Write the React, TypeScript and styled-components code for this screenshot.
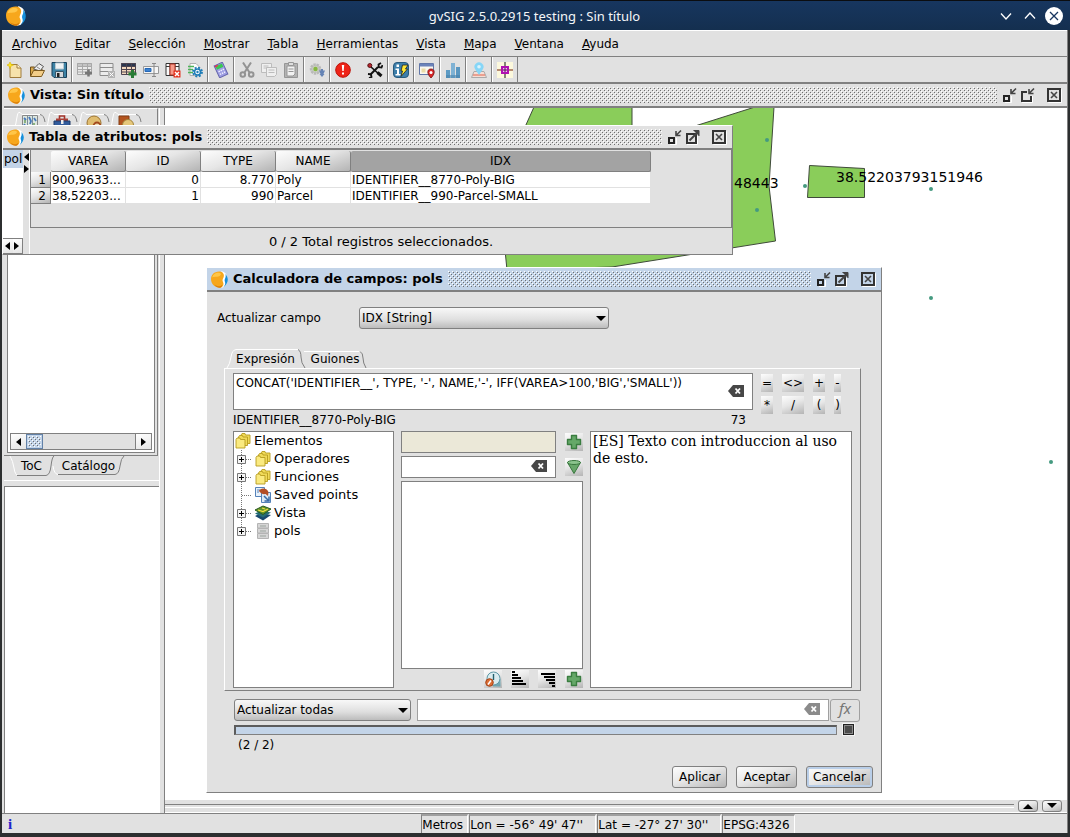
import React from 'react';
import styled, { createGlobalStyle, css } from 'styled-components';

const color = {
  panel: '#e1e1e1',
  line: '#808080',
  active: '#c3d4e8',
  field: '#ebe8d8',
  polygon: '#8acd5a',
  point: '#459a80',
};

const raised = css`
  background: linear-gradient(160deg, #fdfdfd 0%, #e6e6e6 45%, #b4b4b4 100%);
`;

const GlobalStyle = createGlobalStyle`
  * { box-sizing: border-box; }
  body {
    margin: 0;
    background: #2c2e2f;
    color: #000;
    font: 12px/16px "DejaVu Sans", sans-serif;
  }
  button, input, select, textarea {
    margin: 0;
    padding: 0;
    border: 0;
    border-radius: 0;
    background: none;
    color: inherit;
    font: inherit;
  }
  svg { display: block; flex: none; }
`;

/* ---------- main frame ---------- */

const Frame = styled.div`
  display: flex;
  flex-direction: column;
  min-height: 100vh;
`;

const SystemBar = styled.header`
  display: grid;
  grid-template-columns: 72px 1fr 72px;
  align-items: center;
  height: 30px;
  padding: 0 7px 0 6px;
  border-top: 1px solid #0b0d10;
  background: linear-gradient(#17365f, #142f4f);
  color: #f4f6f8;
  font: 13px/20px "Noto Sans", sans-serif;
`;

const SystemTitle = styled.h1`
  margin: 0;
  font: inherit;
  text-align: center;
`;

const SystemButtons = styled.div`
  display: flex;
  justify-content: flex-end;
  gap: 6px;
`;

const PlainButton = styled.button`
  display: flex;
  align-items: center;
  justify-content: center;
`;

const Shell = styled.div`
  flex: 1;
  display: flex;
  flex-direction: column;
  margin: 0 2px 4px;
  border-right: 1px solid ${color.line};
  background: ${color.panel};
`;

const MenuBar = styled.nav`
  display: flex;
  align-items: center;
  gap: 18px;
  height: 27px;
  padding: 0 10px;
  border-top: 1px solid #fff;
  border-bottom: 1px solid ${color.line};
`;

const MenuItem = styled.button`
  line-height: 20px;
`;

const ToolBar = styled.div`
  display: flex;
  height: 27px;
  border-bottom: 2px solid ${color.line};
`;

const ToolGroup = styled.div<{ $gap?: number }>`
  display: flex;
  gap: ${(p) => p.$gap ?? 0}px;
  padding: 0 1px;
  border-left: 1px solid #fff;
  border-right: 1px solid ${color.line};
`;

const ToolButton = styled.button`
  display: flex;
  align-items: center;
  justify-content: center;
  width: 22px;
`;

const Desktop = styled.main`
  position: relative;
  flex: 1;
  display: flex;
  flex-direction: column;
`;

/* ---------- internal windows ---------- */

const TitleBar = styled.div<{ $active?: boolean }>`
  display: flex;
  align-items: center;
  gap: 5px;
  height: 24px;
  padding: 0 5px 0 4px;
  border-bottom: 2px solid ${color.line};
  background: ${(p) => (p.$active ? color.active : color.panel)};
`;

const WindowTitle = styled.h2`
  margin: 0;
  font: bold 13px/20px "DejaVu Sans", sans-serif;
  white-space: nowrap;
`;

const BumpArea = styled.svg`
  flex: 1;
  width: 0;
  min-width: 0;
  height: 16px;
`;

const WindowButtons = styled.div`
  display: flex;
  gap: 2px;
  button:last-child { margin-left: 8px; }
`;

const ViewWindow = styled.section`
  flex: 1;
  display: flex;
  flex-direction: column;
  padding-left: 2px;
`;

const FloatingWindow = styled.section<{ $x: number; $y: number; $w: number }>`
  position: absolute;
  left: ${(p) => p.$x}px;
  top: ${(p) => p.$y}px;
  width: ${(p) => p.$w}px;
  border: 1px solid #fff;
  border-right-color: ${color.line};
  border-bottom-color: ${color.line};
  background: ${color.panel};
`;

/* ---------- map view ---------- */

const ViewBody = styled.div`
  flex: 1;
  display: flex;
`;

const SideColumn = styled.aside`
  display: flex;
  flex-direction: column;
  width: 155px;
`;

const TocPane = styled.div`
  display: flex;
  flex-direction: column;
  height: 348px;
  margin-right: 1px;
  border-top: 1px solid #fff;
  border-right: 1px solid ${color.line};
  border-bottom: 1px solid ${color.line};
`;

const IconTabs = styled.div`
  display: flex;
  height: 20px;
  padding-left: 10px;
`;

const IconTab = styled.button`
  width: 32px;
  height: 20px;
`;

const TocList = styled.div`
  flex: 1;
  display: flex;
  flex-direction: column;
  justify-content: flex-end;
  margin: 0 2px 2px 3px;
  padding: 0 2px 2px;
  border: 1px solid ${color.line};
  background: #fff;
`;

const ScrollTrack = styled.div`
  display: flex;
  height: 17px;
  border: 1px solid ${color.line};
  background: ${color.panel};
`;

const ScrollArrow = styled.button`
  display: flex;
  align-items: center;
  justify-content: center;
  width: 15px;
  background: linear-gradient(160deg, #fff, #e4e4e4);
`;

const ScrollThumb = styled.div`
  display: flex;
  width: 17px;
  padding: 1px;
  overflow: hidden;
  border: 1px solid #6382a8;
  background: ${color.active};
  svg { height: 11px; }
`;

const ScrollSpace = styled.div`
  flex: 1;
  border-right: 1px solid ${color.line};
`;

const BottomTabs = styled.div`
  display: flex;
  height: 24px;
  padding-left: 6px;
`;

const Overview = styled.div`
  flex: 1;
  border-top: 1px solid ${color.line};
  border-left: 1px solid ${color.line};
  background: #fff;
`;

const HorizontalSplitter = styled.div`
  height: 6px;
  border-top: 1px solid #fff;
`;

const VerticalSplitter = styled.div`
  width: 6px;
  border-left: 1px solid #fff;
  border-right: 1px solid ${color.line};
`;

const MapColumn = styled.div`
  flex: 1;
  display: flex;
  flex-direction: column;
  background: #fff;
`;

const MapCanvas = styled.svg`
  flex: 1;
  width: 100%;
`;

const MapFooter = styled.div`
  display: flex;
  align-items: center;
  gap: 4px;
  height: 13px;
  padding-right: 5px;
  border-bottom: 1px solid #fff;
  background: ${color.panel};
`;

const MapFooterRule = styled.div`
  flex: 1;
  height: 4px;
  border-top: 1px solid ${color.line};
  border-bottom: 1px solid #fff;
`;

const StepButton = styled.button`
  display: flex;
  align-items: center;
  justify-content: center;
  width: 20px;
  height: 12px;
  border: 1px solid ${color.line};
  border-radius: 3px;
  ${raised}
`;

const StatusBar = styled.footer`
  display: flex;
  gap: 1px;
  height: 20px;
  border-top: 1px solid ${color.line};
`;

const StatusInfo = styled.div`
  flex: 17 1 0;
  color: #2222cc;
  font: bold 15px/20px "Liberation Serif", serif;
  text-indent: 6px;
`;

const StatusRest = styled.div`
  flex: 11 1 0;
`;

const StatusCell = styled.div<{ $w: number }>`
  width: ${(p) => p.$w}px;
  border-top: 2px solid #a0a0a0;
  border-left: 1px solid ${color.line};
  border-right: 1px solid #fff;
  line-height: 18px;
  white-space: nowrap;
`;

/* ---------- attribute table window ---------- */

const TableBody = styled.div`
  display: flex;
  height: 104px;
`;

const LayerList = styled.div`
  display: flex;
  flex-direction: column;
  justify-content: space-between;
  width: 20px;
  background: #fff;
`;

const LayerName = styled.div`
  padding-left: 1px;
  background: ${color.active};
  line-height: 18px;
`;

const MiniScroll = styled.div`
  display: flex;
  height: 16px;
  border: 1px solid ${color.line};
  border-left: 0;
`;

const TableSplitter = styled.div`
  display: flex;
  flex-direction: column;
  gap: 4px;
  width: 7px;
  padding-top: 3px;
  border-right: 1px solid #fff;
`;

const TablePane = styled.div`
  flex: 1;
  display: flex;
  flex-direction: column;
`;

const TableScroll = styled.div`
  height: 78px;
  padding-top: 1px;
  border: 1px solid ${color.line};
  border-top: 0;
`;

const DataTable = styled.table`
  border-collapse: separate;
  border-spacing: 0;
  table-layout: fixed;
  width: 620px;
`;

const HeadCell = styled.th<{ $w: number; $pressed?: boolean }>`
  width: ${(p) => p.$w}px;
  height: 21px;
  padding: 0;
  border-right: 1px solid ${color.line};
  border-bottom: 1px solid ${color.line};
  border-radius: 2px;
  font-weight: normal;
  ${raised}
  ${(p) => p.$pressed && css`background: #a3a3a3;`}
`;

const CornerCell = styled.td`
  width: 20px;
`;

const RowHead = styled.th`
  height: 16px;
  padding: 1px 4px 0 0;
  border-right: 1px solid ${color.line};
  border-bottom: 1px solid ${color.line};
  font-weight: normal;
  line-height: 14px;
  text-align: right;
  ${raised}
`;

const Cell = styled.td<{ $right?: boolean }>`
  height: 16px;
  padding: 1px 1px 0;
  border-right: 1px solid ${color.panel};
  border-bottom: 1px solid ${color.panel};
  background: #fff;
  line-height: 14px;
  text-align: ${(p) => (p.$right ? 'right' : 'left')};
  white-space: nowrap;
`;

const TableStatus = styled.p`
  margin: 6px 0 0;
  font-size: 13px;
  text-align: center;
`;

/* ---------- field calculator ---------- */

const DialogBody = styled.div`
  padding: 15px 8px 4px 10px;
`;

const FieldRow = styled.div`
  display: grid;
  grid-template-columns: 142px 250px;
  align-items: center;
`;

const SelectBox = styled.div<{ $w: number }>`
  position: relative;
  width: ${(p) => p.$w}px;
  &::after {
    content: '';
    position: absolute;
    right: 3px;
    top: 9px;
    border: 5px solid transparent;
    border-top-color: #000;
    border-bottom: 0;
    pointer-events: none;
  }
`;

const Select = styled.select`
  display: block;
  appearance: none;
  width: 100%;
  height: 22px;
  padding: 0 2px;
  border: 1px solid ${color.line};
  border-radius: 3px;
  background: linear-gradient(#f8f8f8, #dedede 60%, #bcbcbc);
`;

const TabStrip = styled.div`
  display: flex;
  margin: 20px 0 0 10px;
`;

const TabButton = styled.button<{ $w: number; $h: number }>`
  position: relative;
  width: ${(p) => p.$w}px;
  height: ${(p) => p.$h}px;
  svg { position: absolute; left: 0; top: 0; overflow: visible; }
  span { position: relative; white-space: nowrap; }
`;

const ExpressionPane = styled.div`
  margin: 0 12px 0 7px;
  padding: 4px 8px 2px;
  border: 1px solid ${color.line};
  border-top-color: #fff;
  border-left-color: #fff;
`;

const ExpressionRow = styled.div`
  display: flex;
  align-items: flex-start;
  gap: 8px;
  height: 37px;
`;

const FieldFrame = styled.div<{ $h: number; $w?: number; $muted?: boolean; $soft?: boolean }>`
  display: flex;
  align-items: center;
  ${(p) => (p.$w ? `width: ${p.$w}px;` : 'flex: 1;')}
  height: ${(p) => p.$h}px;
  padding: 0 8px 2px 2px;
  border: 1px solid ${(p) => (p.$soft ? '#a0a0a0' : color.line)};
  background: ${(p) => (p.$muted ? color.field : '#fff')};
`;

const ExpressionText = styled.textarea`
  flex: 1;
  height: 33px;
  padding-top: 1px;
  overflow: hidden;
  resize: none;
`;

const TextInput = styled.input`
  flex: 1;
  min-width: 0;
  height: 18px;
`;

const OperatorGrid = styled.div`
  display: grid;
  grid-template-columns: 12px 22px 12px 7px;
  gap: 4px 9px;
  margin-top: 1px;
`;

const OperatorButton = styled.button`
  display: flex;
  align-items: center;
  justify-content: center;
  height: 18px;
  ${raised}
`;

const PreviewRow = styled.div`
  display: flex;
  justify-content: space-between;
  width: 513px;
  padding: 2px 0 3px;
`;

const BuilderRow = styled.div`
  display: flex;
  gap: 7px;
  height: 257px;
`;

const Tree = styled.ul`
  width: 161px;
  margin: 0;
  padding: 0;
  border: 1px solid ${color.line};
  background: #fff;
  list-style: none;
`;

const TreeItem = styled.li<{ $root?: boolean }>`
  display: flex;
  align-items: center;
  gap: 3px;
  height: 18px;
  padding-left: ${(p) => (p.$root ? 1 : 3)}px;
  font-size: 13px;
`;

const FinderColumn = styled.div`
  display: flex;
  flex-direction: column;
  gap: 3px;
  width: 182px;
`;

const FinderLine = styled.div`
  display: flex;
  align-items: center;
  justify-content: space-between;
`;

const ResultList = styled.div`
  flex: 1;
  border: 1px solid ${color.line};
  background: #fff;
`;

const FinderTools = styled.div`
  display: flex;
  justify-content: flex-end;
  gap: 9px;
  margin-top: -2px;
`;

const SquareButton = styled.button`
  display: flex;
  align-items: center;
  justify-content: center;
  width: 18px;
  height: 18px;
  ${raised}
`;

const HelpText = styled.div`
  flex: 1;
  padding: 1px 2px;
  border: 1px solid ${color.line};
  background: #fff;
  font: 14px/17px "DejaVu Serif", serif;
`;

const FilterRow = styled.div`
  display: flex;
  gap: 6px;
  margin: 8px 13px 0 17px;
`;

const FilterField = styled.div`
  flex: 1;
  display: flex;
  gap: 1px;
`;

const FormulaButton = styled.button`
  width: 30px;
  height: 23px;
  padding-bottom: 5px;
  border: 1px solid #a0a0a0;
  border-radius: 3px;
  color: #757575;
  font: italic 15px/16px "Noto Sans", "DejaVu Sans", sans-serif;
`;

const ProgressRow = styled.div`
  display: flex;
  align-items: center;
  gap: 6px;
  height: 15px;
  margin: 0 19px 0 17px;
`;

const ProgressBar = styled.div`
  flex: 1;
  height: 10px;
  border: 1px solid ${color.line};
  border-top: 2px solid #5c5c5c;
  border-left: 2px solid #5c5c5c;
  background: ${color.active};
`;

const StopButton = styled.button`
  width: 11px;
  height: 11px;
  border: 1px solid #222;
  outline: 1px solid #f4f4f4;
  box-shadow: inset 0 0 0 1px #8c8c8c;
  background: #4c4c4c;
`;

const ProgressText = styled.p`
  margin: 0 0 13px 21px;
`;

const DialogButtons = styled.div`
  display: flex;
  justify-content: flex-end;
  gap: 9px;
`;

const ActionButton = styled.button<{ $focused?: boolean }>`
  height: 22px;
  padding: 0 6px;
  border: 1px solid ${color.line};
  border-radius: 3px;
  ${raised}
  ${(p) => p.$focused && css`box-shadow: inset 0 0 0 2px #b9cee8;`}
`;

/* ---------- drawings ---------- */

const Logo = ({ size = 17 }: { size?: number }) => (
  <svg width={size} height={size} viewBox="0 0 20 20" aria-hidden="true">
    <path d="M12 .3C20 1 21.500 12 14.500 19L11 19.800Z" fill="#fff" />
    <path d="M10.500 .5C4 0 0 4.500 0 9.500C0 15.500 4.500 19.800 10.500 19.800C14.500 18.500 15.500 15.500 14 12.500C12.500 9.500 16 7.500 15 4C14.300 1.800 12.500 .7 10.500 .5Z" fill="#f7a71c" />
    <path d="M1.500 7.500C2 3.500 6 1.500 9.500 2C12 2.300 12.500 4 10.500 5.500C8 7.500 4 6 1.500 7.500Z" fill="#ffc648" />
    <path d="M4 16C7 18.500 11 18.800 13 16.500C13.500 18 12 19.500 10.500 19.800C8 19.800 5.500 18.500 4 16Z" fill="#d97d0c" />
    <path d="M16.800 3.500C21.500 8 20.500 15 14.500 19C17.500 15.500 16.800 14 16.200 12C15.300 9 18.500 7.500 16.800 3.500Z" fill="#1590dc" />
  </svg>
);

const Bumps = () => (
  <BumpArea aria-hidden="true" shapeRendering="crispEdges">
    <defs>
      <pattern id="bumps" width="4" height="4" patternUnits="userSpaceOnUse">
        <path d="M0 0h1v1H0zM2 2h1v1H2z" fill="#fff" />
        <path d="M1 1h1v1H1zM3 3h1v1H3z" fill="#6e6e6e" />
      </pattern>
    </defs>
    <rect width="100%" height="100%" fill="url(#bumps)" />
  </BumpArea>
);

type WinIcon = 'minimize' | 'maximize' | 'restore' | 'close';

const WindowIcon = ({ kind }: { kind: WinIcon }) => (
  <svg width="16" height="16" viewBox="0 0 16 16" fill="none" aria-hidden="true">
    {kind === 'minimize' && (
      <>
        <path d="M3 15.500h6.500V9" stroke="#fff" />
        <path d="M2 9h5v5H2z" stroke="#222" strokeWidth="2" />
        <path d="M9 2v4.500h4.500M9.500 6L14 1.500" stroke="#444" strokeWidth="1.600" />
      </>
    )}
    {kind === 'restore' && (
      <>
        <path d="M2 15.500h10.500V9" stroke="#fff" />
        <path d="M7 5H2v9h9V9" stroke="#333" strokeWidth="2" />
        <path d="M9 2v4.500h4.500M9.500 6L14 1.500" stroke="#444" strokeWidth="1.600" />
      </>
    )}
    {kind === 'maximize' && (
      <>
        <path d="M2 15.500h10.500V7" stroke="#fff" />
        <path d="M2 5h9v9H2z" stroke="#333" strokeWidth="2" />
        <path d="M4.500 11.500L12 4" stroke="#444" strokeWidth="2" />
        <path d="M8.500 1.500H14V7" fill="#444" stroke="#444" />
      </>
    )}
    {kind === 'close' && (
      <>
        <path d="M2.500 2.500h13v13h-13z" stroke="#fff" />
        <path d="M2 2h12v12H2z" stroke="#333" strokeWidth="2" />
        <path d="M5 5l6 6M11 5l-6 6" stroke="#444" strokeWidth="1.600" />
      </>
    )}
  </svg>
);

const Grid = ({ head = '#d4d4d4', ink = '#8a8a8a', body = '#f2f2f2' }) => (
  <g stroke={ink}>
    <path d="M.5 1.500h14v11h-14z" fill={body} />
    <path d="M.5 1.500h14v3h-14z" fill={head} />
    <path d="M5.500 1.500v11M10.500 1.500v11M.5 7.500h14M.5 10h14" fill="none" />
  </g>
);

const glyphs: Record<string, React.ReactNode> = {
  newProject: (
    <>
      <path d="M3 2.500h7l4 3.500v9.500H3z" fill="#f6e2ab" stroke="#a07c3c" />
      <path d="M10 2.500V6h4" fill="#fff4d2" stroke="#a07c3c" />
      <path d="M3 0l1 2.200 2.500.8L4 4 3 6.500 2 4 0 3l2-.8z" fill="#ffe520" stroke="#d8b400" strokeWidth=".6" />
    </>
  ),
  open: (
    <>
      <path d="M1.500 14V5h4l1.500 2h6v3" fill="#d9a94c" stroke="#6c4c18" />
      <path d="M4.500 7L10 1.500l4.500 3L11 9z" fill="#ededed" stroke="#555" />
      <path d="M8 5l3 2" stroke="#888" />
      <path d="M1.500 14.500L4.500 8.500h11l-3 6z" fill="#f2cd88" stroke="#7c5a20" />
    </>
  ),
  save: (
    <>
      <path d="M1 .5h14.500v15H3l-2-2z" fill="#3c83a6" stroke="#173f58" />
      <path d="M4.500 1h8v6h-8z" fill="#eef3f5" stroke="#b8c7cf" />
      <path d="M4.500 9.500h8v6h-8z" fill="#d5d9dc" stroke="#35576b" />
      <path d="M6 11h2.500v4H6z" fill="#222" />
    </>
  ),
  gridAdd: (
    <>
      <Grid ink="#a8a8a8" body="#eaeaea" head="#c4c4c4" />
      <path d="M11.500 7.500v7M8 11h7" stroke="#777" strokeWidth="2.500" />
    </>
  ),
  gridEdit: (
    <>
      <path d="M1 1.500h13v12H1zM1 5.500h13M1 9.500h13" fill="#ececec" stroke="#8c8c8c" />
      <path d="M9 9h7v7H9z" fill="#b4b4b4" />
      <path d="M10.500 10.500l4 4M14.500 10.500l-4 4" stroke="#fff" />
    </>
  ),
  addColumn: (
    <>
      <Grid head="#2b3750" ink="#4c4450" body="#f3d7bc" />
      <path d="M11.500 8v8M7.500 12h8" stroke="#287c35" strokeWidth="3" />
    </>
  ),
  rename: (
    <>
      <path d="M.5 4.500h15v7H.5z" fill="#f6f6f6" stroke="#999" />
      <path d="M2 6.500h6v3H2z" fill="#3d83d0" stroke="#2668b8" />
      <path d="M9 1.500h4M11 2v12M9 14.500h4" fill="none" stroke="#888" />
    </>
  ),
  deleteColumn: (
    <>
      <path d="M1 1.500h13v12H1zM1 4.500h13M10 2v12M5 2v12" fill="#fafafa" stroke="#333" />
      <path d="M5 2h5v11H5z" fill="#f79a8a" stroke="#b23425" />
      <path d="M8.500 8.500h7v7h-7z" fill="#e5331e" />
      <path d="M10 10l4 4M14 10l-4 4" stroke="#fff" strokeWidth="1.500" />
    </>
  ),
  tableConfig: (
    <>
      <path d="M3 1.500h6l3 3v9H3z" fill="#fcfcfc" stroke="#b0b0b0" />
      <path d="M1 4.500h6M1 7.500h5M1 10.500h5" stroke="#4eb35a" strokeWidth="1.600" />
      <circle cx="10.500" cy="10" r="4.500" fill="none" stroke="#1e7db8" strokeWidth="1.800" strokeDasharray="2 1.540" />
      <circle cx="10.500" cy="10" r="3" fill="#fff" stroke="#1e7db8" strokeWidth="1.600" />
      <circle cx="10.500" cy="10" r="1.200" fill="#1e7db8" />
    </>
  ),
  calculator: (
    <g transform="rotate(-25 8 8)">
      <path d="M3.500 1.500h9v13h-9z" fill="#9d9de2" stroke="#6464ab" />
      <path d="M4.500 2.500h7v3.500h-7z" fill="#39c851" />
      <path d="M4 2.500h3" stroke="#e34" strokeWidth="1.500" />
      <path d="M5 8.500h6M5 11.500h6" stroke="#eef" strokeWidth="1.500" strokeDasharray="1.500 .8" />
    </g>
  ),
  cut: (
    <g fill="none" stroke="#939393" strokeWidth="2">
      <path d="M4 .5l6.500 10M12 .5L5.500 10.500" />
      <circle cx="3.800" cy="12.500" r="2.300" />
      <circle cx="12.200" cy="12.500" r="2.300" />
    </g>
  ),
  copy: (
    <g fill="#efefef" stroke="#bcbcbc">
      <path d="M.5 1.500h10v9h-10zM2.500 4h5M2.500 6h5" />
      <path d="M5.500 5.500h10v7l-2 2h-8zM7.500 8h6M7.500 10.500h6" />
    </g>
  ),
  paste: (
    <g stroke="#969696">
      <path d="M1.500 1.500h13v14h-13z" fill="#b3b3b3" />
      <path d="M4 4h8v8l-2 2H4z" fill="#f2f2f2" />
      <path d="M5.500.5h5v3h-5z" fill="#ddd" />
      <path d="M5.500 7h5M5.500 9.500h5" />
    </g>
  ),
  process: (
    <>
      <circle cx="6.500" cy="7" r="4.500" fill="#c9cdc1" stroke="#b9b9b9" strokeWidth="2.500" strokeDasharray="2.300 .8" />
      <circle cx="6.500" cy="7" r="2.200" fill="#85b83f" />
      <path d="M10 8.500h2V7h2v1.500h2L14.500 12h1l-2.500 3-2.500-3h1z" fill="#6684b5" />
    </>
  ),
  alert: (
    <>
      <circle cx="8" cy="8" r="7.300" fill="#ee2418" stroke="#bd1208" />
      <path d="M6.800 3h2.400l-.5 6h-1.400zM7 10.500h2v2H7z" fill="#fff" />
    </>
  ),
  tools: (
    <g transform="translate(0 1)">
      <path d="M4 4l9 8" stroke="#111" strokeWidth="1.600" />
      <path d="M10.500 9.500l4 3.500" stroke="#111" strokeWidth="3" />
      <path d="M3 12l8-8" stroke="#111" strokeWidth="2" />
      <path d="M14 0l-2.500 1.500.3 2.700 2.700.3L15.500 2M1 11l3 .3.500 2.700L2 15" fill="none" stroke="#111" strokeWidth="1.800" />
      <circle cx="2.800" cy="2.500" r="2" fill="#b82530" stroke="#511" />
    </g>
  ),
  info: (
    <>
      <rect x=".5" y=".5" width="15" height="15" rx="3.500" fill="#3c7eaa" stroke="#28597c" />
      <path d="M3.500 2.500h2.500v2.500H3.500zM2.500 6.500H6V12h1.500v1.500H2.500V12H4V8H2.500z" fill="#fff" />
      <path d="M9.500 3h5.500l-2.500 4h2L8 14.500l1.500-5.500H8z" fill="#ffe736" stroke="#222" strokeWidth=".8" />
    </>
  ),
  viewPin: (
    <>
      <path d="M.5 1.500h14v11H.5z" fill="#faf8f0" stroke="#6277a8" />
      <path d="M1 2h13v2.500H1z" fill="#6b83ba" />
      <path d="M2.500 6.500h4v4h-4z" fill="#eadca8" />
      <path d="M12 16C7.500 11.500 8 7 12 7s4.500 4.500 0 9z" fill="#d82425" stroke="#751010" strokeWidth=".8" />
      <circle cx="12" cy="10.500" r="1.500" fill="#fff" />
    </>
  ),
  chart: (
    <>
      <path d="M1 8h4v8H1z" fill="#5d9bc4" />
      <path d="M6 1h4v15H6z" fill="#7fb2d4" />
      <path d="M11 5h4v11h-4z" fill="#5b97c0" />
      <path d="M1 13h14v3H1z" fill="#4783ad" opacity=".6" />
    </>
  ),
  mapPin: (
    <>
      <path d="M3 9.500h10l2.500 6H.5z" fill="#f7ded5" stroke="#aaa" />
      <path d="M2 13h12" stroke="#dd624c" />
      <path d="M8 13L4.300 7.500a4.500 4.500 0 1 1 7.400 0z" fill="#86d6f7" />
      <circle cx="8" cy="4.800" r="1.800" fill="#d9f3fd" />
    </>
  ),
  target: (
    <>
      <path d="M0 0h16v16H0z" fill="#fcf8dc" />
      <path d="M8 0v5M8 11v5" stroke="#111" />
      <path d="M0 8h4M12 8h4" stroke="#a0684d" strokeWidth="1.500" />
      <path d="M5 5h6v6H5z" fill="#f7b8f4" stroke="#b010b0" strokeWidth="2" />
      <path d="M8 6v4M6 8h4" stroke="#501050" />
    </>
  ),
  mapTab: (
    <>
      <path d="M.5.5h15v16H.5z" fill="#dde7df" stroke="#888" />
      <path d="M5.500.5v16M10.500.5v16" stroke="#7c8c99" />
      <path d="M2 3l2 2M7 2l2 4-1 3M12 3l2 3M2 9l2 3M7 12l2 2" fill="none" stroke="#4779bb" strokeWidth="1.800" />
      <path d="M12 8v4M3 5v3" stroke="#6fa062" strokeWidth="1.500" />
    </>
  ),
  toolboxTab: (
    <>
      <path d="M5.500 4V1h5v3" fill="none" stroke="#a3332a" strokeWidth="1.600" />
      <path d="M2 3.500h12v4H2z" fill="#aa4038" />
      <path d="M0 6h16v10H0z" fill="#315b9c" stroke="#1e3b69" />
      <path d="M7 5h2.500v4H7z" fill="#eee" />
    </>
  ),
  circleTab: (
    <>
      <circle cx="8" cy="8" r="7" fill="#e0bd70" stroke="#9d7430" />
      <circle cx="11" cy="11" r="3.500" fill="#eedcb0" stroke="#a2481c" strokeWidth="1.800" />
    </>
  ),
  shapesTab: (
    <>
      <path d="M1 1h10v11H1z" fill="#b3541f" stroke="#833c15" />
      <circle cx="10" cy="10" r="5.500" fill="#e5c77b" stroke="#a2823a" />
    </>
  ),
  folders: (
    <g fill="#f0da58" stroke="#b79c1f" strokeWidth=".9">
      <path d="M6 2l1-1.500h3L10.500 2H15v8.500H6z" />
      <path d="M3.500 4l1-1.500h3L8 4h4.500v8.500h-9z" />
      <path d="M1 6.500L2 5h3l.5 1.500H10V15H1z" fill="#faea80" />
    </g>
  ),
  savedPoints: (
    <>
      <path d="M.5.5h9v9h-9z" fill="#e8f1fa" stroke="#5481b8" />
      <path d="M2 3h3M2 5h2" stroke="#5481b8" />
      <path d="M6.500 5.500h9v10h-9z" fill="#dce8f5" stroke="#5481b8" />
      <path d="M4 4c1-3.500 8-3.500 9.500 1L13 9l-2.500-2C8 7.500 5.500 6.500 4 4z" fill="#b34d25" />
      <path d="M9 9l4.500 4.500M14 9.500v4.500H9.500" fill="none" stroke="#386ba8" strokeWidth="1.500" />
    </>
  ),
  layers: (
    <>
      <path d="M0 11l6-3 10 2-8 5.500z" fill="#17486f" />
      <path d="M0 8.500l6-3 10 2-8 5z" fill="#246c75" />
      <path d="M0 5l8-4 8 3-8 5.500z" fill="#5d942b" stroke="#2c5a22" />
      <path d="M3 5l5 1.500L13 4M7 3l3 1" fill="none" stroke="#f2dc40" strokeWidth="1.300" />
    </>
  ),
  database: (
    <g stroke="#b4b4b4">
      <path d="M2.500.5h11v4.500h-11zM2.500 5.500h11v4.500h-11zM2.500 10.500h11v5h-11z" fill="#d6d6d6" />
      <path d="M5 3h6M5 8h6M5 13h6" stroke="#9aa39d" />
    </g>
  ),
  plus: (
    <path d="M5.500 1.500h5v4h4v5h-4v4h-5v-4h-4v-5h4z" fill="#65a868" stroke="#3a7d40" strokeWidth="1.400" strokeLinejoin="round" />
  ),
  filter: (
    <>
      <path d="M1.500 3.500L8 14.500l6.500-11z" fill="#68a76a" stroke="#39773e" strokeLinejoin="round" />
      <ellipse cx="8" cy="3.500" rx="6.500" ry="2" fill="#8bc48d" stroke="#39773e" />
    </>
  ),
  history: (
    <>
      <path d="M8 8h7.500v7.500H8z" fill="#4c98a8" opacity=".7" />
      <circle cx="8.500" cy="7.500" r="6.500" fill="#d9ecf0" stroke="#5f98a6" />
      <path d="M8.500 3v6" stroke="#24606d" strokeWidth="1.400" />
      <circle cx="4.500" cy="11.500" r="3.800" fill="#dc6c32" stroke="#a2441a" />
      <path d="M3 13.500l3-4" stroke="#fff" strokeWidth="1.500" />
    </>
  ),
  sortAsc: <path d="M0 1h3M0 4h6M0 7h9M0 10h11M0 13h14" stroke="#000" strokeWidth="2" />,
  sortDesc: <path d="M2 3h14M5 6h11M7 9h9M10 12h6M13 15h3" stroke="#000" strokeWidth="2" />,
};

const Glyph = ({ name, size = 16 }: { name: string; size?: number }) => (
  <svg width={size} height={size} viewBox="0 0 16 16" fill="none" aria-hidden="true">
    {glyphs[name]}
  </svg>
);

const ClearIcon = ({ faded }: { faded?: boolean }) => (
  <svg width="16" height="12" viewBox="0 0 16 12" aria-hidden="true">
    <path d="M0 6L5 0H16V12H5Z" fill={faded ? '#8b8b8b' : '#474747'} />
    <path d="M7.500 3.500l4.500 5M12 3.500l-4.500 5" stroke="#fff" strokeWidth="1.800" />
  </svg>
);

const Arrow = ({ dir, size = 8 }: { dir: 'left' | 'right' | 'up' | 'down'; size?: number }) => {
  const shapes = { left: 'M6 0v8L1 4z', right: 'M1 0v8l5-4z', up: 'M-1 7h10L4 2z', down: 'M-1 1h10L4 6z' };
  return (
    <svg width={size} height={size} viewBox="0 0 8 8" overflow="visible" aria-hidden="true">
      <path d={shapes[dir]} />
    </svg>
  );
};

const TreeHandle = ({ open, last }: { open: boolean; last: boolean }) => (
  <svg width="15" height="18" viewBox="0 0 15 18" fill="none" aria-hidden="true">
    <path d={`M4.500 0v${last ? 9 : 18}M5 9.500h10`} stroke="#777" strokeDasharray="1 1" />
    {open && (
      <>
        <path d="M.5 5.500h8v8h-8z" fill="#f4f4f4" stroke="#777" />
        <path d="M2 9.500h5M4.500 7v5" stroke="#000" />
      </>
    )}
  </svg>
);

/* ---------- pieces ---------- */

const CaptionBar = ({ title, active, icons }: { title: string; active?: boolean; icons: WinIcon[] }) => (
  <TitleBar $active={active}>
    <Logo />
    <WindowTitle>{title}</WindowTitle>
    <Bumps />
    <WindowButtons>
      {icons.map((kind) => (
        <PlainButton key={kind} aria-label={kind}>
          <WindowIcon kind={kind} />
        </PlainButton>
      ))}
    </WindowButtons>
  </TitleBar>
);

const menus = ['Archivo', 'Editar', 'Selección', 'Mostrar', 'Tabla', 'Herramientas', 'Vista', 'Mapa', 'Ventana', 'Ayuda'];

const toolGroups = [
  ['newProject', 'open', 'save'],
  ['gridAdd', 'gridEdit', 'addColumn', 'rename', 'deleteColumn', 'tableConfig'],
  ['calculator'],
  ['cut', 'copy', 'paste'],
  ['process'],
  ['alert', 'tools'],
  ['info'],
  ['viewPin'],
  ['chart'],
  ['mapPin'],
  ['target'],
];

const points = [
  [767, 140],
  [805, 186],
  [757, 210],
  [931, 189],
  [931, 298],
  [1051, 462],
];

const records = [
  ['900,9633...', '0', '8.770', 'Poly', 'IDENTIFIER__8770-Poly-BIG'],
  ['38,52203...', '1', '990', 'Parcel', 'IDENTIFIER__990-Parcel-SMALL'],
];

const treeNodes = [
  { label: 'Operadores', icon: 'folders', open: true },
  { label: 'Funciones', icon: 'folders', open: true },
  { label: 'Saved points', icon: 'savedPoints', open: false },
  { label: 'Vista', icon: 'layers', open: true },
  { label: 'pols', icon: 'database', open: true },
];

const AttributeTable = () => (
  <FloatingWindow $x={0} $y={41} $w={731}>
    <CaptionBar title="Tabla de atributos: pols" icons={['minimize', 'maximize', 'close']} />
    <TableBody>
      <LayerList>
        <LayerName>pol</LayerName>
        <MiniScroll>
          <ScrollArrow aria-label="Izquierda"><Arrow dir="left" /></ScrollArrow>
          <ScrollArrow aria-label="Derecha"><Arrow dir="right" /></ScrollArrow>
        </MiniScroll>
      </LayerList>
      <TableSplitter>
        <Arrow dir="left" />
        <Arrow dir="right" />
      </TableSplitter>
      <TablePane>
        <TableScroll>
          <DataTable>
            <thead>
              <tr>
                <CornerCell />
                <HeadCell $w={75}>VAREA</HeadCell>
                <HeadCell $w={75}>ID</HeadCell>
                <HeadCell $w={75}>TYPE</HeadCell>
                <HeadCell $w={75}>NAME</HeadCell>
                <HeadCell $w={300} $pressed>IDX</HeadCell>
              </tr>
            </thead>
            <tbody>
              {records.map((record, row) => (
                <tr key={record[4]}>
                  <RowHead scope="row">{row + 1}</RowHead>
                  {record.map((value, col) => (
                    <Cell key={value} $right={col === 1 || col === 2}>{value}</Cell>
                  ))}
                </tr>
              ))}
            </tbody>
          </DataTable>
        </TableScroll>
        <TableStatus>0 / 2 Total registros seleccionados.</TableStatus>
      </TablePane>
    </TableBody>
  </FloatingWindow>
);

const FieldCalculator = () => (
  <FloatingWindow $x={204} $y={183} $w={676}>
    <CaptionBar active title="Calculadora de campos: pols" icons={['minimize', 'maximize', 'close']} />
    <DialogBody>
      <FieldRow>
        <label htmlFor="field">Actualizar campo</label>
        <SelectBox $w={250}>
          <Select id="field"><option>IDX [String]</option></Select>
        </SelectBox>
      </FieldRow>
      <TabStrip>
        <TabButton $w={77} $h={19}>
          <svg width="77" height="19" fill="none">
            <path d="M0 19Q3 15 4 8T9 .5H71" stroke="#fff" />
            <path d="M71 .5Q74 2 74 8T78 19" stroke={color.line} />
          </svg>
          <span>Expresión</span>
        </TabButton>
        <TabButton $w={62} $h={19}>
          <svg width="62" height="19" fill="none">
            <path d="M0 2.500H56" stroke="#fff" />
            <path d="M56 2.500Q59 4 59 9T62 19" stroke={color.line} />
          </svg>
          <span>Guiones</span>
        </TabButton>
      </TabStrip>
      <ExpressionPane>
        <ExpressionRow>
          <FieldFrame $h={37} $w={520}>
            <ExpressionText
              aria-label="Expresión"
              defaultValue="CONCAT('IDENTIFIER__', TYPE, '-', NAME,'-', IFF(VAREA>100,'BIG','SMALL'))"
            />
            <PlainButton aria-label="Borrar expresión"><ClearIcon /></PlainButton>
          </FieldFrame>
          <OperatorGrid>
            {['=', '<>', '+', '-', '*', '/', '(', ')'].map((op) => (
              <OperatorButton key={op}>{op}</OperatorButton>
            ))}
          </OperatorGrid>
        </ExpressionRow>
        <PreviewRow>
          <span>IDENTIFIER__8770-Poly-BIG</span>
          <span>73</span>
        </PreviewRow>
        <BuilderRow>
          <Tree>
            <TreeItem $root><Glyph name="folders" />Elementos</TreeItem>
            {treeNodes.map((node, i) => (
              <TreeItem key={node.label}>
                <TreeHandle open={node.open} last={i === treeNodes.length - 1} />
                <Glyph name={node.icon} />
                {node.label}
              </TreeItem>
            ))}
          </Tree>
          <FinderColumn>
            <FinderLine>
              <FieldFrame $h={22} $w={155} $muted>
                <TextInput aria-label="Elemento" readOnly />
              </FieldFrame>
              <SquareButton aria-label="Añadir"><Glyph name="plus" /></SquareButton>
            </FinderLine>
            <FinderLine>
              <FieldFrame $h={22} $w={155}>
                <TextInput aria-label="Buscar" />
                <PlainButton aria-label="Borrar búsqueda"><ClearIcon /></PlainButton>
              </FieldFrame>
              <SquareButton aria-label="Filtrar"><Glyph name="filter" /></SquareButton>
            </FinderLine>
            <ResultList />
            <FinderTools>
              <SquareButton aria-label="Historial"><Glyph name="history" /></SquareButton>
              <SquareButton aria-label="Orden ascendente"><Glyph name="sortAsc" /></SquareButton>
              <SquareButton aria-label="Orden descendente"><Glyph name="sortDesc" /></SquareButton>
              <SquareButton aria-label="Agregar valor"><Glyph name="plus" /></SquareButton>
            </FinderTools>
          </FinderColumn>
          <HelpText>[ES] Texto con introduccion al uso de esto.</HelpText>
        </BuilderRow>
      </ExpressionPane>
      <FilterRow>
        <SelectBox $w={177}>
          <Select aria-label="Registros"><option>Actualizar todas</option></Select>
        </SelectBox>
        <FilterField>
          <FieldFrame $h={22} $soft>
            <TextInput aria-label="Filtro" />
            <PlainButton aria-label="Borrar filtro"><ClearIcon faded /></PlainButton>
          </FieldFrame>
          <FormulaButton>fx</FormulaButton>
        </FilterField>
      </FilterRow>
      <ProgressRow>
        <ProgressBar />
        <StopButton aria-label="Detener" />
      </ProgressRow>
      <ProgressText>(2 / 2)</ProgressText>
      <DialogButtons>
        <ActionButton>Aplicar</ActionButton>
        <ActionButton>Aceptar</ActionButton>
        <ActionButton $focused>Cancelar</ActionButton>
      </DialogButtons>
    </DialogBody>
  </FloatingWindow>
);

export default function App() {
  return (
    <>
      <GlobalStyle />
      <Frame>
        <SystemBar>
          <Logo size={20} />
          <SystemTitle>gvSIG 2.5.0.2915 testing : Sin título</SystemTitle>
          <SystemButtons>
            <PlainButton aria-label="Minimizar">
              <svg width="18" height="18" fill="none" stroke="#fff" strokeWidth="1.300"><path d="M4 6.500l5 5.500 5-5.500" /></svg>
            </PlainButton>
            <PlainButton aria-label="Maximizar">
              <svg width="18" height="18" fill="none" stroke="#fff" strokeWidth="1.300"><path d="M4 11.500L9 6l5 5.500" /></svg>
            </PlainButton>
            <PlainButton aria-label="Cerrar">
              <svg width="18" height="18" fill="none">
                <circle cx="9" cy="9" r="9" fill="#fff" />
                <path d="M5 5l8 8M13 5l-8 8" stroke="#17365f" strokeWidth="1.300" />
              </svg>
            </PlainButton>
          </SystemButtons>
        </SystemBar>
        <Shell>
          <MenuBar>
            {menus.map((name) => (
              <MenuItem key={name}><u>{name[0]}</u>{name.slice(1)}</MenuItem>
            ))}
          </MenuBar>
          <ToolBar role="toolbar">
            {toolGroups.map((group) => (
              <ToolGroup key={group[0]} $gap={group[0] === 'alert' ? 10 : 0}>
                {group.map((name) => (
                  <ToolButton key={name} aria-label={name}><Glyph name={name} /></ToolButton>
                ))}
              </ToolGroup>
            ))}
          </ToolBar>
          <Desktop>
            <ViewWindow>
              <CaptionBar title="Vista: Sin título" icons={['minimize', 'restore', 'close']} />
              <ViewBody>
                <SideColumn>
                  <TocPane>
                    <IconTabs>
                      {['mapTab', 'toolboxTab', 'circleTab', 'shapesTab'].map((name) => (
                        <IconTab key={name} aria-label={name}>
                          <svg width="32" height="20" fill="none">
                            <path d="M0 20Q2 16 3 8T8 5.500H26" stroke="#fff" />
                            <path d="M26 5.500Q30 6 31 13" stroke={color.line} />
                            <g transform="translate(8 6)">{glyphs[name]}</g>
                          </svg>
                        </IconTab>
                      ))}
                    </IconTabs>
                    <TocList>
                      <ScrollTrack>
                        <ScrollArrow aria-label="Desplazar a la izquierda"><Arrow dir="left" /></ScrollArrow>
                        <ScrollThumb><Bumps /></ScrollThumb>
                        <ScrollSpace />
                        <ScrollArrow aria-label="Desplazar a la derecha"><Arrow dir="right" /></ScrollArrow>
                      </ScrollTrack>
                    </TocList>
                  </TocPane>
                  <BottomTabs>
                    <TabButton $w={43} $h={20}>
                      <svg width="43" height="20" fill="none">
                        <path d="M0 0Q3 5 4 12T8 19.500" stroke="#fff" />
                        <path d="M7 19.500H36Q40 19 41 10T44 0" stroke={color.line} />
                      </svg>
                      <span>ToC</span>
                    </TabButton>
                    <TabButton $w={71} $h={20}>
                      <svg width="71" height="20" fill="none">
                        <path d="M0 10Q1 18 5 18.500" stroke="#fff" />
                        <path d="M5 18.500H62Q66 18 67 10T71 0" stroke={color.line} />
                      </svg>
                      <span>Catálogo</span>
                    </TabButton>
                  </BottomTabs>
                  <HorizontalSplitter />
                  <Overview />
                </SideColumn>
                <VerticalSplitter />
                <MapColumn>
                  <MapCanvas role="img" aria-label="Mapa">
                    <g transform="translate(-165 -108)">
                      <path
                        d="M534 107H632V140L695 126L755 107H774L769 186L775.500 241L612 267L507 270L504 240L525 127Z"
                        fill={color.polygon}
                        stroke="#3f4a3a"
                      />
                      <path d="M809.500 165.500L864.500 168.500V197.500H807.500Z" fill={color.polygon} stroke="#3f4a3a" />
                      {points.map(([x, y]) => (
                        <circle key={`${x}-${y}`} cx={x} cy={y} r="2" fill={color.point} />
                      ))}
                      <text x="734" y="188" fontSize="14">48443</text>
                      <text x="836" y="182" fontSize="14">38.52203793151946</text>
                    </g>
                  </MapCanvas>
                  <MapFooter>
                    <MapFooterRule />
                    <StepButton aria-label="Subir"><Arrow dir="up" /></StepButton>
                    <StepButton aria-label="Bajar"><Arrow dir="down" /></StepButton>
                  </MapFooter>
                </MapColumn>
              </ViewBody>
            </ViewWindow>
            <AttributeTable />
            <FieldCalculator />
          </Desktop>
          <StatusBar>
            <StatusInfo>i</StatusInfo>
            <StatusCell $w={47}>Metros</StatusCell>
            <StatusCell $w={127}>Lon = -56° 49' 47''</StatusCell>
            <StatusCell $w={124}>Lat = -27° 27' 30''</StatusCell>
            <StatusCell $w={73}>EPSG:4326</StatusCell>
            <StatusRest />
          </StatusBar>
        </Shell>
      </Frame>
    </>
  );
}
